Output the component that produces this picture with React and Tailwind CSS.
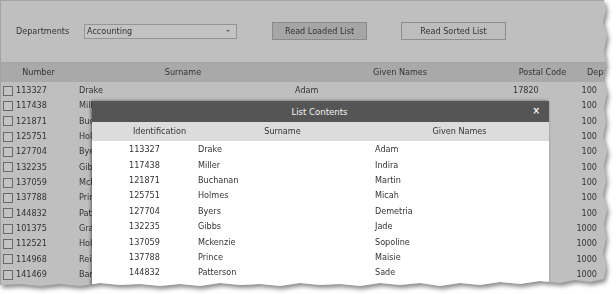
import React from "react";

const rows = [
  { id: "113327", surname: "Drake", given: "Adam", postal: "17820", dep: "100" },
  { id: "117438", surname: "Miller", given: "Indira", postal: "17820", dep: "100" },
  { id: "121871", surname: "Buchanan", given: "Martin", postal: "17820", dep: "100" },
  { id: "125751", surname: "Holmes", given: "Micah", postal: "17820", dep: "100" },
  { id: "127704", surname: "Byers", given: "Demetria", postal: "17820", dep: "100" },
  { id: "132235", surname: "Gibbs", given: "Jade", postal: "17820", dep: "100" },
  { id: "137059", surname: "Mckenzie", given: "Sopoline", postal: "17820", dep: "100" },
  { id: "137788", surname: "Prince", given: "Maisie", postal: "17820", dep: "100" },
  { id: "144832", surname: "Patterson", given: "Sade", postal: "17820", dep: "100" },
  { id: "101375", surname: "Graham", given: "Lacey", postal: "17821", dep: "1000" },
  { id: "112521", surname: "Holland", given: "Oren", postal: "17821", dep: "1000" },
  { id: "114968", surname: "Reid", given: "Tana", postal: "17821", dep: "1000" },
  { id: "141469", surname: "Barnes", given: "Quinn", postal: "17821", dep: "1000" },
];

const modalRows = rows.slice(0, 9);

export default function App() {
  return (
    <div className="w-[616px] h-[294px] bg-white overflow-hidden">
      <div className="drop-shadow-[2px_3px_2px_rgba(0,0,0,0.45)]">
        <div
          className="relative w-[608px] h-[287px] bg-[#bfbfbf] overflow-hidden border-l border-t border-[#a3a3a3] text-[9px] text-[#333] leading-none [clip-path:polygon(0_0,604px_0,606px_10px,603px_22px,607px_36px,604px_50px,606px_64px,603px_79px,607px_93px,604px_108px,606px_122px,603px_137px,607px_151px,604px_166px,606px_180px,603px_195px,607px_209px,604px_224px,606px_238px,603px_253px,606px_267px,604px_279px,590px_282px,575px_280px,560px_283px,540px_281px,520px_284px,500px_282px,480px_285px,460px_283px,440px_286px,420px_283px,400px_285px,380px_283px,360px_286px,340px_284px,320px_285px,300px_283px,280px_286px,260px_284px,240px_285px,220px_283px,200px_286px,180px_284px,160px_286px,140px_284px,120px_285px,100px_283px,80px_286px,60px_284px,40px_286px,20px_284px,0_285px)]"
          style={{ fontFamily: '"DejaVu Sans Condensed", "DejaVu Sans", sans-serif' }}
        >
          {/* toolbar */}
          <div className="h-[62px] flex items-center pb-[1px] border-b border-[#a6a6a6]">
            <span className="ml-[15px] w-[68px]">Departments</span>
            <div className="w-[153px] h-[15px] border border-[#959595] bg-[#c3c3c3] flex items-center justify-between px-[2px]">
              <span>Accounting</span>
              <svg width="6" height="4" viewBox="0 0 6 4" className="mr-[3px]">
                <path d="M1 1 L3 3 L5 1 Z" fill="#666" />
              </svg>
            </div>
            <button className="ml-[35px] w-[95px] h-[18px] border border-[#8a8a8a] bg-[#a6a6a6] text-[#333]">
              Read Loaded List
            </button>
            <button className="ml-[34px] w-[105px] h-[18px] border border-[#8e8e8e] bg-[#bdbdbd] text-[#333]">
              Read Sorted List
            </button>
          </div>

          {/* grid header */}
          <div className="h-[19px] bg-[#a9a9a9] flex items-center">
            <div className="w-[75px] shrink-0 text-center">Number</div>
            <div className="w-[214px] shrink-0 text-center">Surname</div>
            <div className="w-[220px] shrink-0 text-center">Given Names</div>
            <div className="w-[65px] shrink-0 text-center">Postal Code</div>
            <div className="shrink-0 pl-[12px] whitespace-nowrap">Department</div>
          </div>

          {/* grid rows */}
          <div className="pt-[1px]">
            {rows.map((r) => (
              <div key={r.id} className="h-[15.33px] flex items-center">
                <div className="w-[75px] shrink-0 flex items-center pl-[2px]">
                  <span className="w-[10px] h-[10px] border border-[#6a6a6a] bg-[#c4c4c4]" />
                  <span className="ml-[3px]">{r.id}</span>
                </div>
                <div className="w-[214px] shrink-0 pl-[3px]">{r.surname}</div>
                <div className="w-[220px] shrink-0 pl-[5px]">{r.given}</div>
                <div className="w-[65px] shrink-0 pl-[3px]">{r.postal}</div>
                <div className="w-[22px] shrink-0 text-right">{r.dep}</div>
              </div>
            ))}
          </div>

          {/* modal */}
          <div className="absolute left-[91px] top-[100px] w-[457px] h-[220px] bg-white shadow-[-1px_0_3px_rgba(0,0,0,0.55)]">
            <div className="h-[21px] bg-[#555555] text-[#f4f4f4] flex items-center relative">
              <span className="mx-auto pr-[2px] text-[9.5px]">List Contents</span>
              <span className="absolute right-[9px] top-[5px] text-[10px] font-bold">×</span>
            </div>
            <div className="h-[19px] bg-[#dcdcdc] flex items-center">
              <div className="w-[135px] text-center">Identification</div>
              <div className="w-[111px] text-center">Surname</div>
              <div className="w-[32px]" />
              <div className="flex-1 text-center">Given Names</div>
            </div>
            <div className="pt-[1px]">
              {modalRows.map((r) => (
                <div key={r.id} className="h-[15.4px] flex items-center">
                  <div className="w-[106px] pl-[37px]">{r.id}</div>
                  <div className="w-[177px]">{r.surname}</div>
                  <div className="flex-1">{r.given}</div>
                </div>
              ))}
            </div>
          </div>
        </div>
      </div>
    </div>
  );
}
